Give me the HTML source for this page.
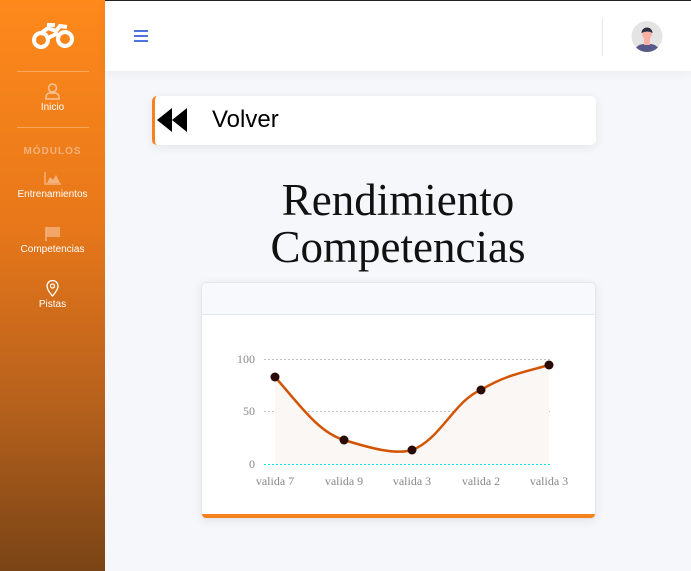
<!DOCTYPE html>
<html><head><meta charset="utf-8"><style>
*{margin:0;padding:0;box-sizing:border-box}
body{width:691px;height:571px;overflow:hidden;background:#f6f7fb;font-family:"Liberation Sans",sans-serif;position:relative}
.side{position:absolute;left:0;top:0;width:105px;height:571px;background:linear-gradient(#fe891b 0%,#e7771a 40%,#b8621c 70%,#7a4416 100%)}
.top{position:absolute;left:105px;top:0;right:0;height:71px;background:#fff;border-top:1px solid #222;box-shadow:0 2px 10px rgba(0,0,0,.06)}
.hr{position:absolute;left:17px;width:72px;height:1px;background:rgba(255,255,255,.3)}
.lbl{position:absolute;left:0;width:105px;text-align:center;color:#fff;font-size:10px}
.ico{position:absolute;left:0;width:105px;text-align:center}
.card{position:absolute;background:#fff;border-radius:5px;box-shadow:0 2px 10px rgba(0,0,0,.08)}
</style></head><body>
<div class="side">
 <svg style="position:absolute;left:32px;top:22px" width="42" height="28" viewBox="0 0 42 28"><circle cx="9" cy="18" r="7" fill="none" stroke="#fff" stroke-width="4"/><circle cx="33" cy="17" r="7" fill="none" stroke="#fff" stroke-width="4"/><path d="M8 12 L16 6 L24 9 L28 4 L35 5 M14 17 L26 11" stroke="#fff" stroke-width="4" fill="none"/><rect x="15" y="1" width="8" height="4" fill="#fff"/></svg>
 <div class="hr" style="top:71px"></div>
 <svg class="ico" style="top:83px" height="17" viewBox="0 0 105 17"><circle cx="52.5" cy="5" r="4" fill="none" stroke="#f7c59a" stroke-width="1.5"/><path d="M46 16 v-2 a4 4 0 0 1 4-4 h5 a4 4 0 0 1 4 4 v2z" fill="none" stroke="#f7c59a" stroke-width="1.5"/></svg>
 <div class="lbl" style="top:102px">Inicio</div>
 <div class="hr" style="top:127px"></div>
 <div class="lbl" style="top:146px;font-weight:bold;color:#f5b27c;letter-spacing:1px;font-size:10px">MÓDULOS</div>
 <svg class="ico" style="top:171px" height="14" viewBox="0 0 105 14"><path d="M45 1 v12 h16" stroke="#f5b27c" stroke-width="1.5" fill="none"/><path d="M47 12 l3-6 3 3 3-5 4 8z" fill="#f5b27c"/></svg>
 <div class="lbl" style="top:189px">Entrenamientos</div>
 <svg class="ico" style="top:226px" height="15" viewBox="0 0 105 15"><rect x="46" y="1" width="14" height="10" fill="#f5b27c" opacity=".8"/><path d="M46 1 v14" stroke="#f5b27c" stroke-width="1.5"/></svg>
 <div class="lbl" style="top:244px">Competencias</div>
 <svg class="ico" style="top:280px" height="17" viewBox="0 0 105 17"><path d="M52.5 16 C48 11 47 8 47 6 a5.5 5.5 0 0 1 11 0 c0 2-1 5-5.5 10z" fill="none" stroke="#fff" stroke-width="1.3"/><circle cx="52.5" cy="6" r="2" fill="none" stroke="#fff" stroke-width="1.2"/></svg>
 <div class="lbl" style="top:299px">Pistas</div>
</div>
<div class="top">
 <svg style="position:absolute;left:29px;top:29px" width="14" height="12"><rect y="0" width="14" height="2" fill="#4e73df"/><rect y="5" width="14" height="2" fill="#4e73df"/><rect y="10" width="14" height="2" fill="#4e73df"/></svg>
 <div style="position:absolute;left:497px;top:17px;width:1px;height:38px;background:#e3e6f0"></div>
 <svg style="position:absolute;left:526px;top:19px" width="32" height="33" viewBox="0 0 32 33"><circle cx="16" cy="16.5" r="15.5" fill="#e4e4e4"/><clipPath id="c"><circle cx="16" cy="16.5" r="15.5"/></clipPath><g clip-path="url(#c)"><path d="M3 33 q1-8 9-9 h8 q8 1 9 9z" fill="#575a89"/><rect x="13" y="18" width="6" height="7" fill="#f9b0a5"/><circle cx="16" cy="14" r="5" fill="#f9b0a5"/><path d="M10.5 13 a5.5 5.5 0 0 1 11 0 q-5-3-11 0z" fill="#2f2e41"/></g></svg>
</div>
<div class="card" style="left:152px;top:96px;width:444px;height:49px;border-left:3px solid #f5821f">
 <svg style="position:absolute;left:2px;top:12px" width="32" height="24" viewBox="0 0 32 24"><path d="M0 12 L15 0 V24Z M15 12 L30 0 V24Z" fill="#000"/></svg>
 <div style="position:absolute;left:57px;top:10px;font-size:24px;color:#000">Volver</div>
</div>
<div style="position:absolute;left:198px;width:400px;top:177px;text-align:center;font-family:'Liberation Serif',serif;font-size:45px;line-height:47px;color:#111">Rendimiento<br>Competencias</div>
<div class="card" style="left:201px;top:282px;width:395px;height:237px;overflow:hidden;border:1px solid #e3e6f0">
 <div style="height:32px;background:#f8f9fc;border-bottom:1px solid #e3e6f0"></div>
 <div style="position:absolute;left:0;bottom:0;width:100%;height:4px;background:#f5821f"></div>
</div>
<svg style="position:absolute;left:0;top:0" width="691" height="571">
 <g stroke="#c8c0c0" stroke-dasharray="2 2" stroke-width="1"><line x1="264" y1="359.5" x2="550" y2="359.5"/><line x1="264" y1="411.5" x2="550" y2="411.5"/></g>
 <line x1="264" y1="464.5" x2="550" y2="464.5" stroke="#00e5ee" stroke-dasharray="2 2"/>
 <path d="M275 377 C300 405 318 432 344 440 C370 448 395 455 412 450 C440 440 455 400 481 390 C505 375 525 372 549 365 V464 H275Z" fill="#fbf7f4"/>
 <path d="M275 377 C300 405 318 432 344 440 C370 448 395 455 412 450 C440 440 455 400 481 390 C505 375 525 372 549 365" fill="none" stroke="#d35400" stroke-width="2.5"/>
 <g fill="#2a0a05"><circle cx="275" cy="377" r="4.5"/><circle cx="344" cy="440" r="4.5"/><circle cx="412" cy="450" r="4.5"/><circle cx="481" cy="390" r="4.5"/><circle cx="549" cy="365" r="4.5"/></g>
 <g font-family="Liberation Serif,serif" font-size="12" fill="#888"><text x="255" y="363" text-anchor="end">100</text><text x="255" y="415" text-anchor="end">50</text><text x="255" y="468" text-anchor="end">0</text>
 <g text-anchor="middle"><text x="275" y="485">valida 7</text><text x="344" y="485">valida 9</text><text x="412" y="485">valida 3</text><text x="481" y="485">valida 2</text><text x="549" y="485">valida 3</text></g></g>
</svg>
</body></html>
